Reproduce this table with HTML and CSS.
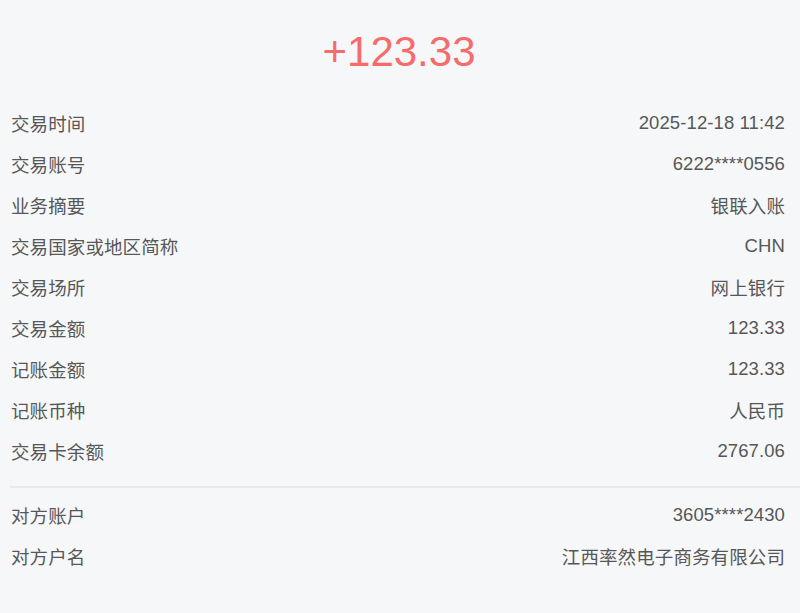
FILE: index.html
```html
<!DOCTYPE html>
<html lang="zh-CN">
<head>
<meta charset="utf-8">
<link rel="stylesheet" href="styles.css">
</head>
<body>
<div class="page">
  <div class="amount">+123.33</div>
  <div class="list">
    <div class="row"><span class="label">交易时间</span><span class="value">2025-12-18 11:42</span></div>
    <div class="row"><span class="label">交易账号</span><span class="value">6222****0556</span></div>
    <div class="row"><span class="label">业务摘要</span><span class="value">银联入账</span></div>
    <div class="row"><span class="label">交易国家或地区简称</span><span class="value">CHN</span></div>
    <div class="row"><span class="label">交易场所</span><span class="value">网上银行</span></div>
    <div class="row"><span class="label">交易金额</span><span class="value">123.33</span></div>
    <div class="row"><span class="label">记账金额</span><span class="value">123.33</span></div>
    <div class="row"><span class="label">记账币种</span><span class="value">人民币</span></div>
    <div class="row"><span class="label">交易卡余额</span><span class="value">2767.06</span></div>
  </div>
  <div class="divider"></div>
  <div class="list">
    <div class="row"><span class="label">对方账户</span><span class="value">3605****2430</span></div>
    <div class="row"><span class="label">对方户名</span><span class="value">江西率然电子商务有限公司</span></div>
  </div>
</div>
</body>
</html>
```
FILE: styles.css
```css
html, body {
  margin: 0;
  padding: 0;
  background: #f6f7f9;
}
body {
  font-family: "Liberation Sans", "Noto Sans CJK SC", sans-serif;
  color: #575757;
  height: 613px;
  overflow: hidden;
}
.page {
  padding-top: 31px;
}
.amount {
  font-size: 42px;
  line-height: 42px;
  height: 42px;
  color: #f66b6b;
  text-align: center;
  padding-right: 2px;
  margin-bottom: 29px;
}
.list {
  padding: 0 15px 0 11px;
}
.row {
  display: flex;
  justify-content: space-between;
  align-items: center;
  height: 41px;
  font-size: 18.5px;
  letter-spacing: 0.1px;
}
.divider {
  height: 2px;
  background: #e9eaec;
  margin: 15px 0 6px 10px;
}
```
